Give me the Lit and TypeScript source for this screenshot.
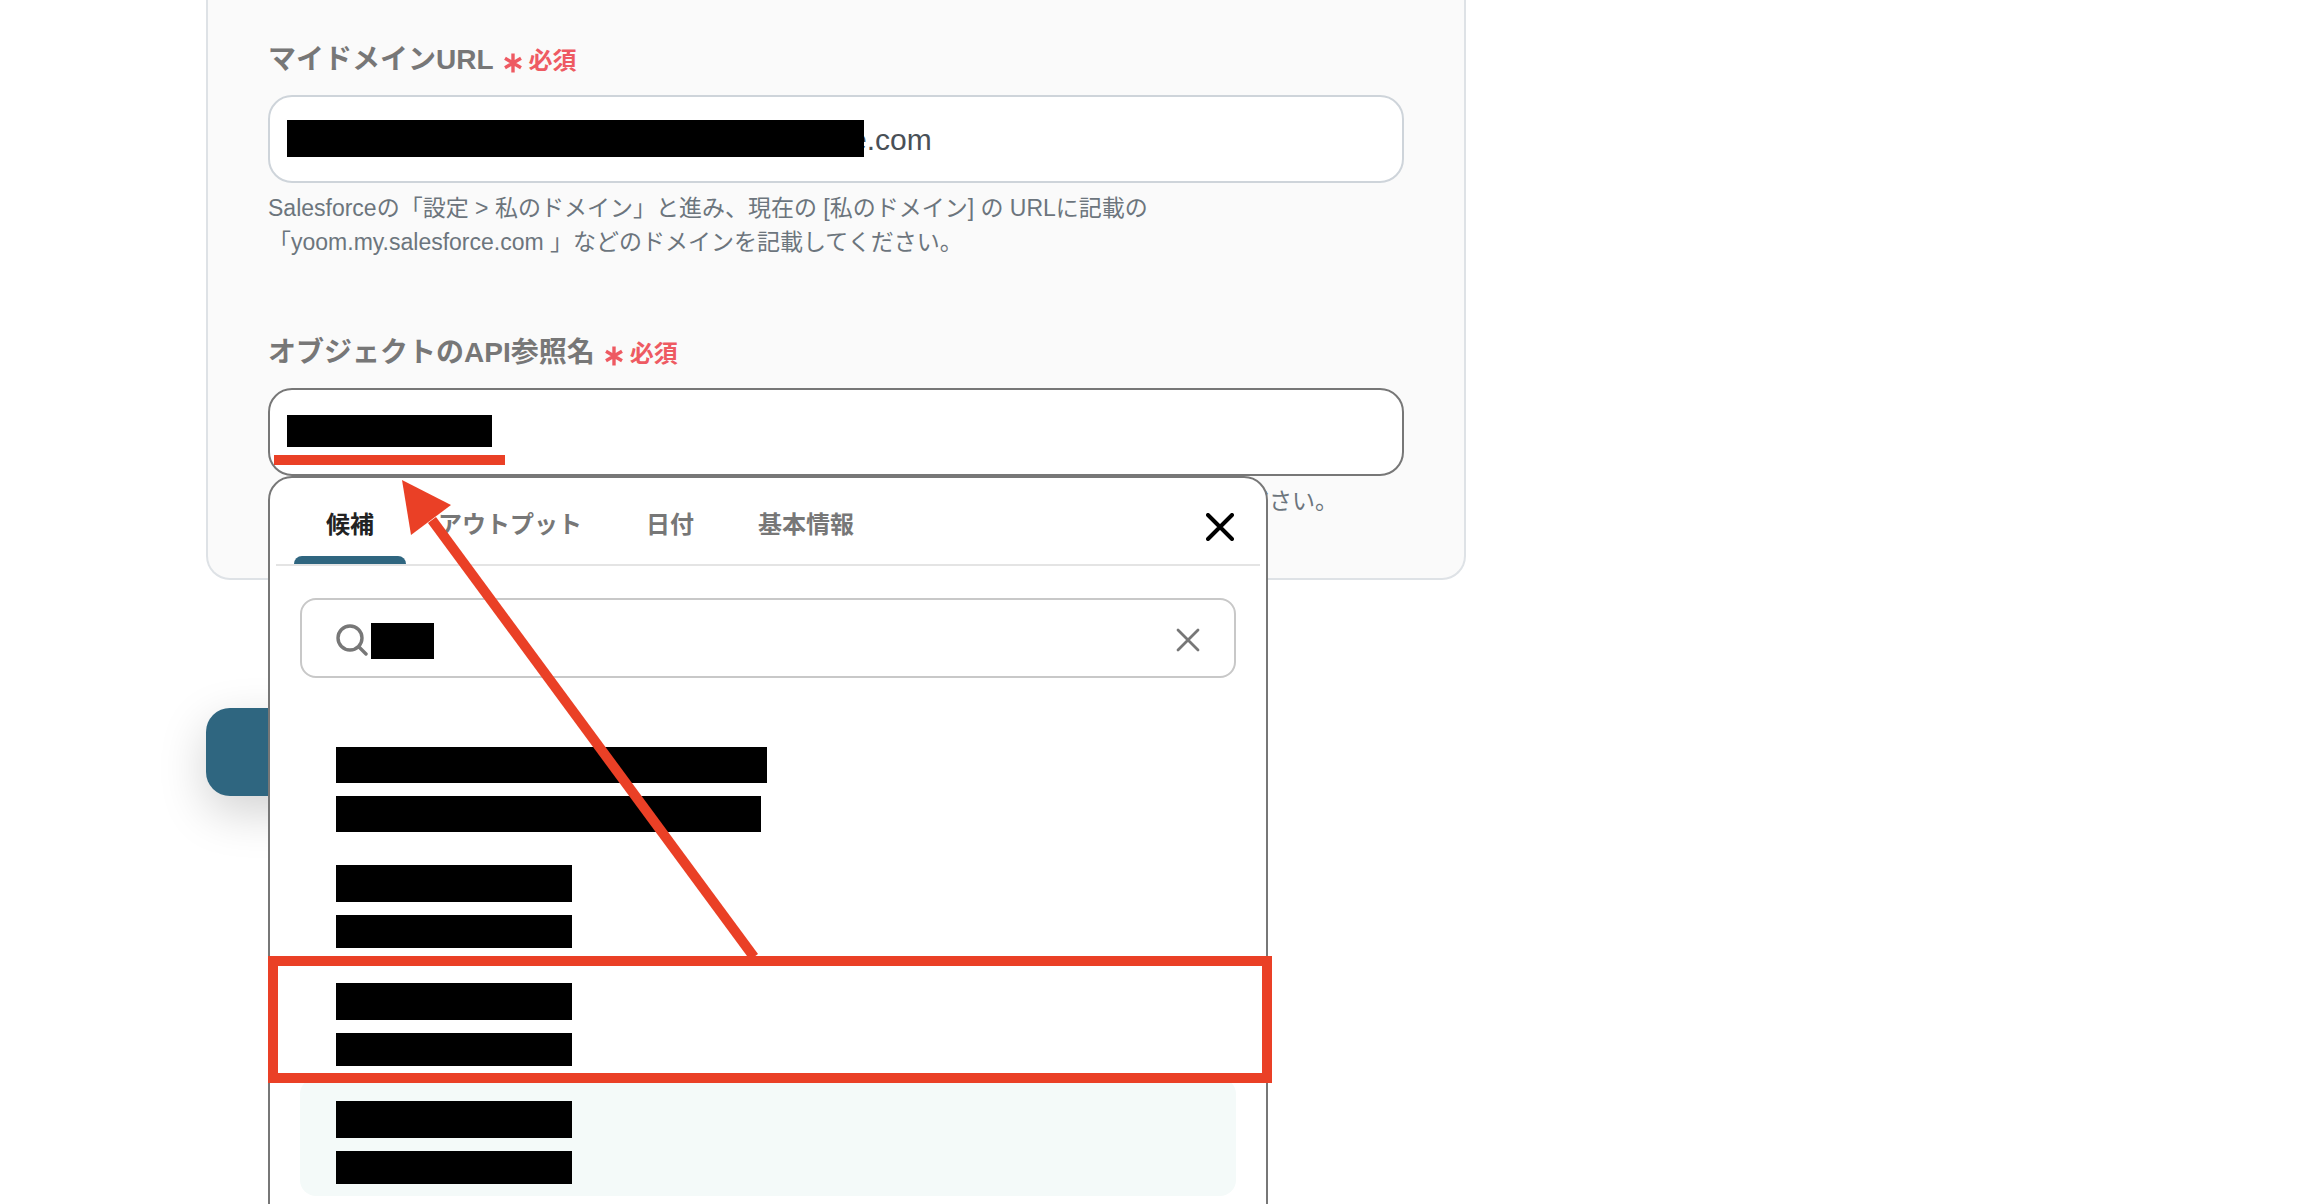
import { LitElement, html, css, svg } from "lit";
import { customElement, property, state } from "lit/decorators.js";
import { classMap } from "lit/directives/class-map.js";
import { styleMap } from "lit/directives/style-map.js";

interface Bar {
  width: number;
  height: number;
}

interface Candidate {
  bars: Bar[];
}

const TABS = ["候補", "アウトプット", "日付", "基本情報"];

const SHORT: Bar[] = [
  { width: 236, height: 37 },
  { width: 236, height: 33 },
];

const CANDIDATES: Candidate[] = [
  {
    bars: [
      { width: 431, height: 36 },
      { width: 425, height: 36 },
    ],
  },
  { bars: SHORT },
  { bars: SHORT },
  { bars: SHORT },
];

const FONT = css`"Liberation Sans", "Noto Sans CJK JP", sans-serif`;

/** Suggestion menu that opens under a field. */
@customElement("candidate-menu")
export class CandidateMenu extends LitElement {
  @property({ type: Number }) active = 3;
  @state() private tab = 0;

  static styles = css`
    :host {
      display: block;
      box-sizing: border-box;
      border: 2px solid #777777;
      border-radius: 24px;
      background: #ffffff;
      font-family: ${FONT};
    }
    button {
      border: 0;
      background: none;
      padding: 0;
      font: inherit;
      color: inherit;
      cursor: pointer;
    }
    svg {
      display: block;
    }
    .header {
      display: flex;
      justify-content: space-between;
      align-items: stretch;
      height: 86px;
      margin: 0 6px;
      padding: 0 26px 0 18px;
      border-bottom: 2px solid #e4e4e4;
    }
    .tabs {
      display: flex;
    }
    .tab {
      position: relative;
      padding: 8px 32px 0;
      font-size: 24px;
      line-height: 36px;
      font-weight: 700;
      color: #777777;
    }
    .tab.on {
      color: #222222;
    }
    .tab.on::after {
      content: "";
      position: absolute;
      left: 0;
      right: 0;
      bottom: 0;
      height: 8px;
      border-radius: 8px 8px 0 0;
      background: #2f6680;
    }
    .close {
      padding-top: 12px;
    }
    .search {
      display: flex;
      align-items: center;
      box-sizing: border-box;
      height: 80px;
      margin: 32px 30px 46px;
      padding: 3px 34px 0;
      border: 2px solid #c8c8c8;
      border-radius: 16px;
    }
    .mask {
      flex: none;
      width: 63px;
      height: 36px;
      margin: 3px 0 0 3px;
      background: #000000;
    }
    .query {
      flex: 1;
      min-width: 0;
      border: 0;
      outline: 0;
      font: inherit;
      font-size: 24px;
      background: none;
    }
    .list {
      list-style: none;
      margin: 0;
      padding: 0 30px 48px;
    }
    .option {
      display: flex;
      flex-direction: column;
      gap: 13px;
      box-sizing: border-box;
      width: 100%;
      height: 118px;
      padding: 23px 36px 0;
      border-radius: 16px;
    }
    .option.on {
      background: #f4faf9;
    }
    .bar {
      background: #000000;
    }
  `;

  render() {
    return html`
      <div class="header">
        <div class="tabs" role="tablist">
          ${TABS.map(
            (name, i) => html`<button
              class=${classMap({ tab: true, on: i === this.tab })}
              role="tab"
              aria-selected=${i === this.tab ? "true" : "false"}
              @click=${() => (this.tab = i)}
            >${name}</button>`
          )}
        </div>
        <button class="close" aria-label="閉じる">
          <svg width="28" height="28" viewBox="0 0 28 28" fill="none" stroke="#000000" stroke-width="4" stroke-linecap="round">
            <path d="M2 2 26 26M26 2 2 26" />
          </svg>
        </button>
      </div>
      <div class="search">
        <svg width="32" height="32" viewBox="0 0 32 32" fill="none" stroke="#777777" stroke-width="3.4" stroke-linecap="round">
          <circle cx="14" cy="14" r="12" />
          <path d="M23 23 30 30" />
        </svg>
        <span class="mask"></span>
        <input class="query" type="text" aria-label="検索" />
        <button aria-label="クリア">
          <svg width="24" height="24" viewBox="0 0 24 24" fill="none" stroke="#777777" stroke-width="2.8" stroke-linecap="round">
            <path d="M2 2 22 22M22 2 2 22" />
          </svg>
        </button>
      </div>
      <ul class="list">
        ${CANDIDATES.map(
          (c, i) => html`<li>
            <button class=${classMap({ option: true, on: i === this.active })} aria-label=${`候補 ${i + 1}`}>
              ${c.bars.map(
                (b) => html`<span class="bar" style=${styleMap({ width: `${b.width}px`, height: `${b.height}px` })}></span>`
              )}
            </button>
          </li>`
        )}
      </ul>
    `;
  }
}

@customElement("app-root")
export class AppRoot extends LitElement {
  static styles = css`
    :host {
      display: block;
      font-family: ${FONT};
    }
    .page {
      position: relative;
      box-sizing: border-box;
      height: 100vh;
      overflow: hidden;
      padding-left: 206px;
      background: #ffffff;
    }
    .card {
      box-sizing: border-box;
      max-width: 1260px;
      padding: 39px 60px 60px;
      border: 2px solid #dee2e6;
      border-top: 0;
      border-radius: 0 0 24px 24px;
      background: #fafafa;
    }
    .field + .field {
      margin-top: 73px;
    }
    .label {
      display: flex;
      align-items: center;
      gap: 10px;
      margin-bottom: 14px;
      font-size: 28px;
      line-height: 42px;
      font-weight: 700;
      color: #777777;
    }
    .required {
      display: flex;
      align-items: center;
      gap: 7px;
      padding-top: 2px;
      font-size: 24px;
      line-height: 36px;
      color: #ee5a62;
    }
    .star {
      margin-top: 4px;
    }
    .control {
      position: relative;
    }
    .input {
      display: block;
      box-sizing: border-box;
      width: 100%;
      height: 88px;
      padding: 2px 18px 0;
      border: 2px solid #ced4da;
      border-radius: 24px;
      outline: 0;
      background: #ffffff;
      font-family: inherit;
      font-size: 30px;
      color: #495057;
    }
    .input.domain {
      padding-left: 580px;
    }
    .input.focused {
      border-color: #777777;
    }
    .mask {
      position: absolute;
      left: 19px;
      background: #000000;
    }
    .mask.long {
      top: 25px;
      width: 577px;
      height: 37px;
    }
    .mask.short {
      top: 27px;
      width: 205px;
      height: 32px;
    }
    .menu {
      position: absolute;
      top: 100%;
      left: 0;
      width: 1000px;
      z-index: 1;
    }
    .help {
      margin: 8px 0 0;
      font-size: 23px;
      line-height: 34px;
      color: #6c757d;
    }
    .help.end {
      padding-right: 66px;
      text-align: right;
    }
    .submit {
      display: block;
      width: 240px;
      height: 88px;
      margin-top: 128px;
      border: 0;
      border-radius: 24px;
      background: #2f6680;
      box-shadow: 0 16px 48px rgba(0, 0, 0, 0.18);
    }
    .notes {
      position: absolute;
      top: 0;
      left: 0;
      z-index: 2;
      pointer-events: none;
    }
  `;

  private label(id: string, text: string) {
    return html`<label class="label" for=${id}>
      <span>${text}</span>
      <span class="required">
        <svg class="star" width="18" height="20" viewBox="0 0 18 20" fill="none" stroke="currentColor" stroke-width="3.4">
          <path d="M9 0.5V19.5M1 5.2 17 14.8M17 5.2 1 14.8" />
        </svg>
        <span>必須</span>
      </span>
    </label>`;
  }

  render() {
    const shapes = svg`
      <rect x="274" y="455" width="231" height="10" fill="#ea4026" />
      <path d="M432 520 754 957" stroke="#ea4026" stroke-width="10" fill="none" />
      <path d="M402 480 451 505 411 535Z" fill="#ea4026" />
      <rect x="273" y="961" width="994" height="117" fill="none" stroke="#ea4026" stroke-width="10" />
    `;
    return html`
      <main class="page">
        <section class="card">
          <div class="field">
            ${this.label("domain", "マイドメインURL")}
            <div class="control">
              <input class="input domain" id="domain" type="text" value="e.com" />
              <span class="mask long"></span>
            </div>
            <p class="help">
              Salesforceの「設定 &gt; 私のドメイン」と進み、現在の [私のドメイン] の URLに記載の<br />「yoom.my.salesforce.com 」などのドメインを記載してください。
            </p>
          </div>
          <div class="field">
            ${this.label("object", "オブジェクトのAPI参照名")}
            <div class="control">
              <input class="input focused" id="object" type="text" />
              <span class="mask short"></span>
              <candidate-menu class="menu"></candidate-menu>
            </div>
            <p class="help end">ください。</p>
          </div>
        </section>
        <button class="submit" aria-label="保存"></button>
        <svg class="notes" width="1300" height="1204" viewBox="0 0 1300 1204" aria-hidden="true">${shapes}</svg>
      </main>
    `;
  }
}
